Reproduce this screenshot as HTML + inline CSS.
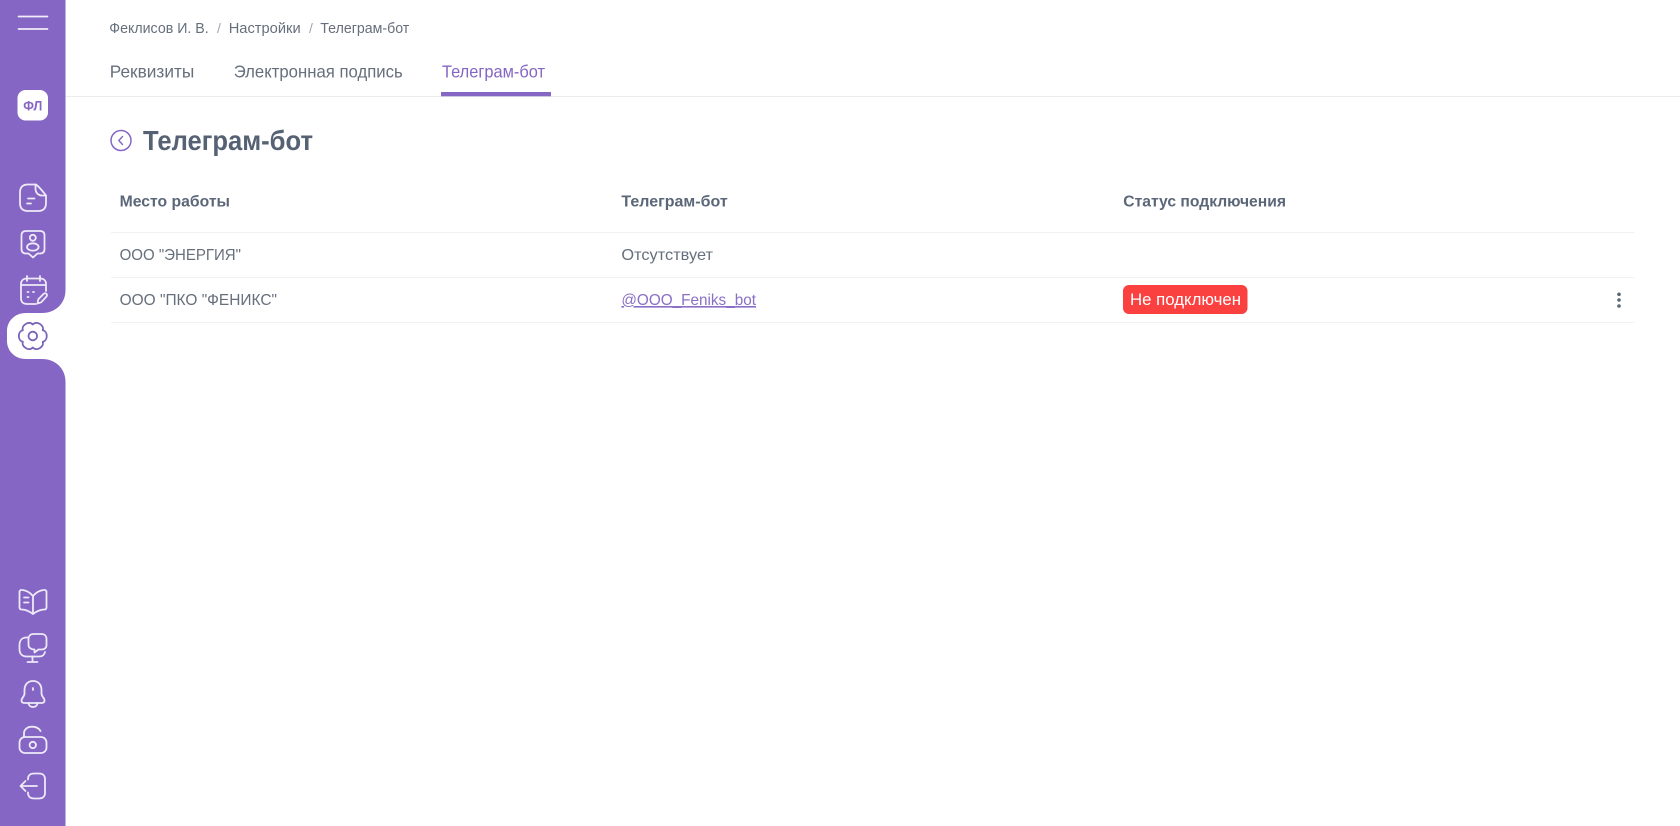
<!DOCTYPE html>
<html lang="ru"><head><meta charset="utf-8"><title>Телеграм-бот</title>
<style>
html,body{margin:0;padding:0;width:1680px;height:826px;overflow:hidden;background:#fff}
svg{display:block;position:absolute;left:0;top:0}
text{font-family:"Liberation Sans",sans-serif;fill:#666f7c;font-size:16px}
.tab{font-size:17.5px}
.th{font-weight:700;fill:#5b6778;font-size:16px}
.bc{font-size:15px}
.ic{fill:none;stroke:#eee9f8;stroke-width:1.800;stroke-linecap:round;stroke-linejoin:round}
</style></head><body>
<svg width="1680" height="826" viewBox="0 0 1680 826" xmlns="http://www.w3.org/2000/svg">
<path fill="#8566c4" d="M0 0H65.500V290C65.500 304 55 313 42 313H26C15 313 7 321 7 331V341C7 351 15 359 26 359H42C55 359 65.500 368 65.500 382V826H0Z"/>
<path stroke="#f1edf9" stroke-width="1.700" stroke-linecap="round" d="M18.500 16.500H47.500M18.500 29H47.500"/>
<rect x="17.500" y="90" width="30.500" height="30.500" rx="8" fill="#fff"/>
<text x="32.800" y="110.300" text-anchor="middle" textLength="19" lengthAdjust="spacingAndGlyphs" style="font-size:13.500px;font-weight:700;fill:#8566c4">ФЛ</text>

<g class="ic">
<path d="M36 184.500H28C22.500 184.500 20 187.500 20 192.500V203C20 208 22.500 211 28 211H38C43.500 211 46 208 46 203V195.500C42 190.500 39.500 187 36 184.500Z"/>
<path d="M35.500 184.500V188.500C35.500 193 38.500 195.500 42 195.500H46"/>
<path d="M28 198.500H34.500M27 203.500H31"/>
<path d="M26 231H40C43 231 44.500 232.500 44.500 235.500V249C44.500 252 43 253.500 40 253.500H37.500L33 257.500L28.500 253.500H26C23 253.500 21.500 252 21.500 249V235.500C21.500 232.500 23 231 26 231Z"/>
<circle cx="32.800" cy="237.800" r="3"/><ellipse cx="32.800" cy="247" rx="5.800" ry="3.700"/>
<path d="M46 291V284C46 280.500 43.500 278.500 40 278.500H27C23.500 278.500 21 280.500 21 284V298.500C21 302 23.500 304 27 304H36"/>
<path d="M27 276V281M40 276V281M21.500 285H45.500"/>
<path d="M27.500 292H28.500M33 292H34M27.500 297H28.500"/>
<path d="M37.500 303.500L38.300 299.300L43.500 294C44.500 293 45.800 293 46.500 293.800C47.200 294.600 47.200 295.800 46.300 296.700L41.200 302.300Z"/>
<g style="stroke:#7a64b8" transform="translate(32.800 336)"><circle r="4.300"/>
<path d="M9.960 -5.750C15.300 -4.680 15.300 4.680 9.960 5.750C11.700 10.910 3.600 15.590 0 11.500C-3.600 15.590 -11.700 10.910 -9.960 5.750C-15.300 4.680 -15.300 -4.680 -9.960 -5.750C-11.700 -10.910 -3.600 -15.590 0 -11.500C3.600 -15.590 11.700 -10.910 9.960 -5.750Z"/></g>
<path d="M33 596V614M33 614C29 611 25 609.500 21.500 609.500C20.300 609.500 19.500 608.700 19.500 607.500V592C19.500 590.800 20.500 589.700 21.800 589.900C26 590.300 30 592.500 33 596C36 592.500 40 590.300 44.200 589.900C45.500 589.700 46.500 590.800 46.500 592V607.500C46.500 608.700 45.700 609.500 44.500 609.500C41 609.500 37 611 33 614Z"/>
<path d="M24 597.500H28.500M24 602.500H28.500"/>
<path d="M28 637.500H26.500C22 637.500 19.500 640.500 19.500 645V649C19.500 653.500 22 656.500 26.500 656.500H39.500C42.500 656.500 44.500 654.500 45 652"/>
<path d="M33.500 634H41.500C44.500 634 46.500 636 46.500 639V645C46.500 648 44.500 649.500 41.500 649.500H38.500L34.500 652.500L34.500 649.500C31 649.500 28.500 647.500 28.500 645V639C28.500 636 30.500 634 33.500 634Z"/>
<path d="M32.500 656.500V662M27.500 662H37.500"/>
<path d="M33 681C27.500 681 24.500 685 24.500 690V693.500C24.500 696.500 21.500 698 21.500 700.500C21.500 702 22.500 703 24.500 703H41.500C43.500 703 44.500 702 44.500 700.500C44.500 698 41.500 696.500 41.500 693.500V690C41.500 685 38.500 681 33 681Z"/>
<path d="M33 688V690M28.500 703C28.700 705.500 30.500 707 33 707C35.500 707 37.300 705.500 37.500 703"/>
<rect x="19.500" y="737" width="27" height="16" rx="5.500"/><circle cx="32.800" cy="745" r="3.200"/>
<path d="M24 737V733C24 729.500 27.500 726.700 32 726.700C36 726.700 39 728.500 40.500 731"/>
<path d="M28 779.500V779C28 775.500 30.500 773.500 34 773.500H39C42.500 773.500 45 775.500 45 779V793C45 796.500 42.500 798.500 39 798.500H34C30.500 798.500 28 796.500 28 793V792.500"/>
<path d="M20.500 786H37M25.500 781L20.500 786L25.500 791"/>
</g>

<text class="bc" x="109.300" y="33" textLength="99.400" lengthAdjust="spacingAndGlyphs">Феклисов И. В.</text>
<text x="217" y="33" style="font-size:14px;fill:#a0a7b0">/</text>
<text class="bc" x="228.700" y="33" textLength="72" lengthAdjust="spacingAndGlyphs">Настройки</text>
<text x="309" y="33" style="font-size:14px;fill:#a0a7b0">/</text>
<text class="bc" x="320.300" y="33" textLength="89" lengthAdjust="spacingAndGlyphs">Телеграм-бот</text>

<text class="tab" x="109.700" y="77.300" textLength="84.600" lengthAdjust="spacingAndGlyphs">Реквизиты</text>
<text class="tab" x="233.700" y="77.300" textLength="169" lengthAdjust="spacingAndGlyphs">Электронная подпись</text>
<text class="tab" x="442" y="77.300" textLength="103" lengthAdjust="spacingAndGlyphs" style="fill:#8566c4">Телеграм-бот</text>
<rect x="65.500" y="96" width="1614.500" height="1" fill="#ececef"/>
<rect x="441" y="92" width="110" height="4.300" fill="#8566c4"/>

<circle cx="121" cy="140.500" r="10" fill="none" stroke="#8566c4" stroke-width="1.500"/>
<path d="M122.500 136.500L118.800 140.500L122.500 144.500" fill="none" stroke="#8566c4" stroke-width="1.400" stroke-linecap="round" stroke-linejoin="round"/>
<text x="143" y="150" textLength="170" lengthAdjust="spacingAndGlyphs" style="font-size:27.500px;font-weight:700;fill:#566273">Телеграм-бот</text>

<text class="th" x="119.600" y="206.700" textLength="110.400" lengthAdjust="spacingAndGlyphs">Место работы</text>
<text class="th" x="621.400" y="206.700" textLength="106.300" lengthAdjust="spacingAndGlyphs">Телеграм-бот</text>
<text class="th" x="1123.300" y="206.700" textLength="162.700" lengthAdjust="spacingAndGlyphs">Статус подключения</text>
<rect x="111" y="232" width="1523.500" height="1" fill="#f0f1f3"/>
<text x="119.600" y="260" textLength="121.400" lengthAdjust="spacingAndGlyphs">ООО "ЭНЕРГИЯ"</text>
<text x="621.400" y="260" textLength="91.600" lengthAdjust="spacingAndGlyphs">Отсутствует</text>
<rect x="111" y="277" width="1523.500" height="1" fill="#f0f1f3"/>
<text x="119.600" y="305" textLength="157.400" lengthAdjust="spacingAndGlyphs">ООО "ПКО "ФЕНИКС"</text>
<text x="621.400" y="305" textLength="134.600" lengthAdjust="spacingAndGlyphs" text-decoration="underline" style="fill:#8a6fc6">@ООО_Feniks_bot</text>
<rect x="1123" y="285" width="124.500" height="29" rx="6" fill="#fb4040"/>
<text x="1130" y="305" textLength="111" lengthAdjust="spacingAndGlyphs" style="font-size:16.500px;fill:#fff">Не подключен</text>
<g fill="#5b6778"><circle cx="1619" cy="294.300" r="1.800"/><circle cx="1619" cy="300" r="1.800"/><circle cx="1619" cy="306" r="1.800"/></g>
<rect x="111" y="322" width="1523.500" height="1" fill="#f0f1f3"/>
</svg>
</body></html>
